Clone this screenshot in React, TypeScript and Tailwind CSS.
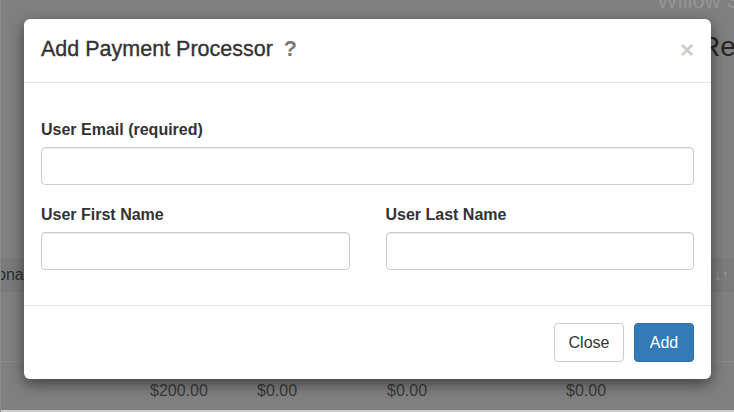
export default function App() {
  const font = { fontFamily: '"Liberation Sans", Arial, sans-serif' };

  return (
    <div
      className="relative w-[734px] h-[412px] overflow-hidden bg-[#808080] flex flex-col border-l border-[#8a8a8a]"
      style={font}
    >
      {/* page behind the backdrop */}
      <div className="h-[12px] overflow-hidden pl-[656px]">
        <div className="-mt-[12px] text-[22px] leading-[26px] text-[#959595] whitespace-nowrap">Willow S</div>
      </div>
      <div className="mt-[18px] pl-[699px] text-[28px] leading-[34px] text-[#262626] whitespace-nowrap">Re</div>
      <div className="mt-[194px] h-[34px] bg-[#7b7b7b] flex items-center justify-between">
        <span className="-ml-[4px] text-[16px] text-[#2e2e2e]">ona</span>
        <span className="mr-[5px] text-[15px] font-bold text-[#979797]">↓↑</span>
      </div>
      <div className="mt-[69px] h-px bg-[#888888]" />
      <div className="mt-[19px] flex pl-[149px] text-[16px] leading-[20px] text-[#3a3a3a]">
        <span className="w-[107px]">$200.00</span>
        <span className="w-[130px]">$0.00</span>
        <span className="w-[179px]">$0.00</span>
        <span>$0.00</span>
      </div>
      <div className="mt-auto h-[2px] bg-[#cfcfcf]" />

      {/* modal */}
      <div className="absolute left-[23px] top-[19px] w-[687px] bg-white rounded-[6px] shadow-[0_5px_15px_rgba(0,0,0,0.5)]">
        <div className="h-[64px] px-[17px] pb-[2px] flex items-center justify-between border-b border-[#e5e5e5]">
          <h4 className="text-[21.5px] leading-[29px] text-[#333] [-webkit-text-stroke:0.35px_#333]">
            Add Payment Processor
            <span className="ml-[11px] font-bold text-[#777] [-webkit-text-stroke:0px]">?</span>
          </h4>
          <button className="text-[24px] leading-none font-bold text-[#cdcdcd]">×</button>
        </div>

        <div className="px-[17px] pt-[34px] pb-[35px]">
          <label className="block text-[16px] leading-[25px] font-bold text-[#333] mb-[5px]">User Email (required)</label>
          <input className="block w-full h-[38px] rounded-[4px] border border-[#cccccc] shadow-[inset_0_1px_1px_rgba(0,0,0,0.075)]" />
          <div className="mt-[17px] grid grid-cols-2 gap-x-[36px]">
            <div>
              <label className="block text-[16px] leading-[25px] font-bold text-[#333] mb-[5px]">User First Name</label>
              <input className="block w-full h-[38px] rounded-[4px] border border-[#cccccc] shadow-[inset_0_1px_1px_rgba(0,0,0,0.075)]" />
            </div>
            <div>
              <label className="block text-[16px] leading-[25px] font-bold text-[#333] mb-[5px]">User Last Name</label>
              <input className="block w-full h-[38px] rounded-[4px] border border-[#cccccc] shadow-[inset_0_1px_1px_rgba(0,0,0,0.075)]" />
            </div>
          </div>
        </div>

        <div className="h-[74px] px-[17px] flex items-center justify-end gap-[10px] border-t border-[#e5e5e5]">
          <button className="w-[70px] h-[39px] rounded-[4px] border border-[#cccccc] bg-white text-[16px] text-[#333]">Close</button>
          <button className="w-[60px] h-[39px] rounded-[4px] border border-[#2e6da4] bg-[#337ab7] text-[16px] text-white">Add</button>
        </div>
      </div>
    </div>
  );
}
